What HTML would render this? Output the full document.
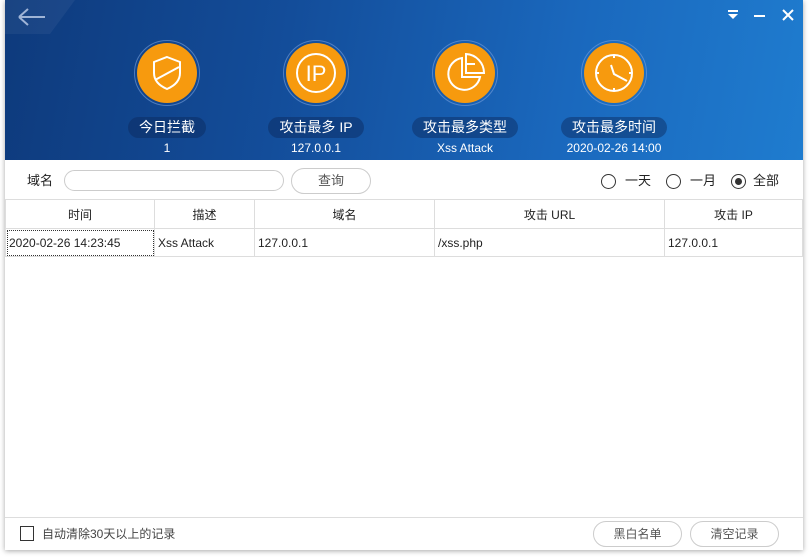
<!DOCTYPE html>
<html><head><meta charset="utf-8"><style>
*{margin:0;padding:0;box-sizing:border-box}
body{width:810px;height:557px;background:#fff;font-family:"Liberation Sans","Noto Sans CJK SC",sans-serif;font-size:12px;color:#222;position:relative;overflow:hidden}
.win{position:absolute;left:5px;top:0;width:798px;height:550px;background:#fff;box-shadow:0 1px 5px rgba(0,0,0,.35)}
.hdr{position:absolute;left:0;top:0;width:798px;height:160px;background:linear-gradient(100deg,#0e3a7c 0%,#134d9a 35%,#1a68bd 70%,#1f7ccf 100%)}
.item{position:absolute;top:40px;width:120px;text-align:center;color:#fff}
.circ{margin:0 auto;width:66px;height:66px;border-radius:50%;border:1px solid rgba(120,160,220,.6);padding:2px}
.circ div{width:60px;height:60px;border-radius:50%;background:#f79a0e;display:flex;align-items:center;justify-content:center}
.pill{display:inline-block;margin-top:11px;height:21px;line-height:21px;padding:0 11px;border-radius:11px;background:rgba(10,40,90,.45);font-size:14px}
.val{font-size:12px;margin-top:3px}
.t{position:absolute;line-height:16px}
table{position:absolute;left:0;top:199px;border-collapse:collapse;width:798px}
td,th{border:1px solid #ddd;height:28px;font-weight:normal;font-size:12px}
th{text-align:center;height:29px}
td{padding-left:3px}
.btn{position:absolute;border:1px solid #ccc;border-radius:13px;text-align:center;color:#555;background:#fff}
.radio{position:absolute;width:15px;height:15px;border:1px solid #333;border-radius:50%;top:174px}
</style></head><body>
<div class="win">
<div class="hdr">
<svg class="t" style="left:0;top:0" width="70" height="34"><path d="M0 0H70L45 34H0Z" fill="rgba(255,255,255,.05)"/></svg>
<svg class="t" style="left:12px;top:6px" width="30" height="22"><path d="M2 11H28M2 11L11 3M2 11L11 19" stroke="#9fb4d6" stroke-width="2" fill="none"/></svg>
<svg class="t" style="left:722px;top:10px" width="12" height="10"><rect x="1" y="0" width="10" height="2" fill="#fff"/><path d="M1 4H11L6 9Z" fill="#fff"/></svg>
<div class="t" style="left:749px;top:15px;width:11px;height:2px;background:#fff"></div>
<svg class="t" style="left:777px;top:9px" width="12" height="12"><path d="M1 1L11 11M11 1L1 11" stroke="#fff" stroke-width="2"/></svg>
<div class="item" style="left:102px"><div class="circ"><div><svg width="40" height="40" viewBox="0 0 40 40" fill="none" stroke="#fff" stroke-width="2"><path d="M20 4L33 9V20C33 28 27 33 20 36C13 33 7 28 7 20V9Z"/><path d="M8 27L32 14"/></svg></div></div><div class="pill">今日拦截</div><div class="val">1</div></div>
<div class="item" style="left:251px"><div class="circ"><div><svg width="44" height="44" viewBox="0 0 44 44"><circle cx="22" cy="22" r="19" stroke="#fff" stroke-width="2" fill="none"/><text x="22" y="30" font-size="22" fill="#fff" text-anchor="middle" font-family="Liberation Sans">IP</text></svg></div></div><div class="pill">攻击最多 IP</div><div class="val">127.0.0.1</div></div>
<div class="item" style="left:400px"><div class="circ"><div><svg width="44" height="44" viewBox="0 0 44 44" fill="none" stroke="#fff" stroke-width="2"><path d="M19 7A16 16 0 1 0 37 26H19Z"/><path d="M23 3V22H41A19 19 0 0 0 23 3Z"/><path d="M23 13H32"/></svg></div></div><div class="pill">攻击最多类型</div><div class="val">Xss Attack</div></div>
<div class="item" style="left:549px"><div class="circ"><div><svg width="42" height="42" viewBox="0 0 42 42" fill="none" stroke="#fff" stroke-width="2"><circle cx="21" cy="21" r="18"/><path d="M18 13L21 22L34 29"/><path d="M21 3V6M21 36V39M3 21H6M36 21H39"/></svg></div></div><div class="pill">攻击最多时间</div><div class="val">2020-02-26 14:00</div></div>
</div>
<div class="t" style="left:22px;top:173px;font-size:13px">域名</div>
<div class="t" style="left:59px;top:170px;width:220px;height:21px;border:1px solid #ccc;border-radius:11px"></div>
<div class="btn" style="left:286px;top:168px;width:80px;height:26px;line-height:24px;font-size:13px">查询</div>
<div class="radio" style="left:596px"></div><div class="t" style="left:620px;top:173px;font-size:13px">一天</div>
<div class="radio" style="left:661px"></div><div class="t" style="left:685px;top:173px;font-size:13px">一月</div>
<div class="radio" style="left:726px"><div style="margin:3px;width:7px;height:7px;border-radius:50%;background:#333"></div></div><div class="t" style="left:748px;top:173px;font-size:13px">全部</div>
<table><tr><th style="width:149px">时间</th><th style="width:100px">描述</th><th style="width:180px">域名</th><th style="width:230px">攻击 URL</th><th>攻击 IP</th></tr>
<tr><td style="outline:1px dotted #333;outline-offset:-2px">2020-02-26 14:23:45</td><td>Xss Attack</td><td>127.0.0.1</td><td>/xss.php</td><td>127.0.0.1</td></tr></table>
<div class="t" style="left:0;top:517px;width:798px;height:1px;background:#ddd"></div>
<div class="t" style="left:15px;top:526px;width:14px;height:15px;border:1px solid #333"></div>
<div class="t" style="left:37px;top:526px;color:#444">自动清除30天以上的记录</div>
<div class="btn" style="left:588px;top:521px;width:89px;height:26px;line-height:24px">黑白名单</div>
<div class="btn" style="left:685px;top:521px;width:89px;height:26px;line-height:24px">清空记录</div>
</div>
</body></html>
